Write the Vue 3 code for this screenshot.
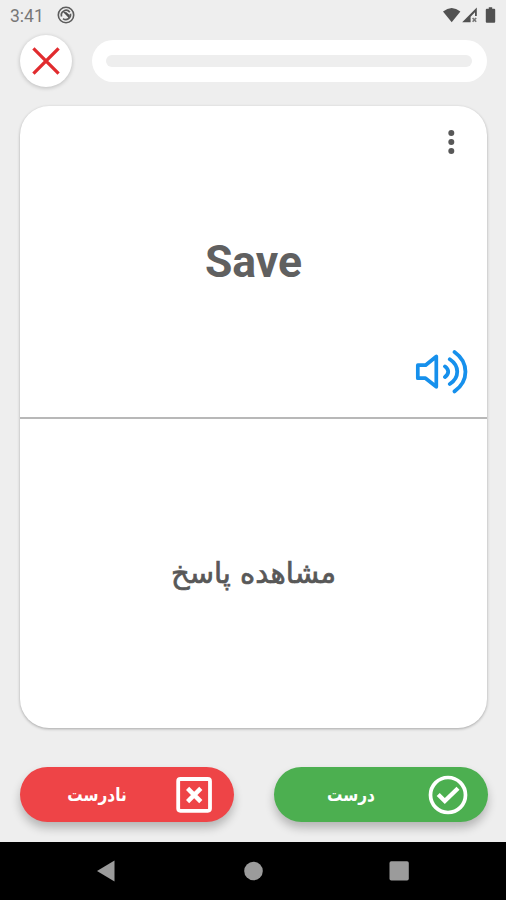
<!-- FlashCard screen -->
<template>
    <div class="screen">
        <div class="status-bar">
            <span class="clock">3:41</span>
            <svg class="app-icon" width="18" height="18" viewBox="0 0 18 18">
                <circle cx="9" cy="9" r="7.7" fill="none" stroke="#5c5c5c" stroke-width="1.6" />
                <path d="M4.6 10.5 A4.7 4.7 0 0 1 12.8 6.2 M13.4 7.8 A4.7 4.7 0 0 1 6 12.6" fill="none" stroke="#5c5c5c" stroke-width="1.7" />
                <path d="M5.8 5.8 L9.5 6.2 L12.8 9.2 L11.8 12 Z" fill="#505050" />
            </svg>
            <svg class="system-icons" width="56" height="18" viewBox="0 0 56 18">
                <path d="M1 4.6 Q9.7 -2.4 18.4 4.6 L9.7 15.3 Z" fill="#515151" />
                <path d="M20.2 15.2 L34.8 .6 V8.9 H33 V5.2 L28.6 9.8 V15.2 Z" fill="#515151" />
                <path d="M30.6 11 L34.2 14.8 M34.2 11 L30.6 14.8" stroke="#777" stroke-width="1.6" />
                <path d="M44.8 1.8 h2 v-1.5 h3.4 v1.5 h2 q1 0 1 1 v12 q0 1 -1 1 h-7.4 q-1 0 -1 -1 v-12 q0 -1 1 -1 z" fill="#515151" />
            </svg>
        </div>

        <div class="top-row">
            <button class="close-button" aria-label="close">
                <svg width="52" height="52" viewBox="0 0 52 52">
                    <path d="M14.6 14.6 L37.4 37.4 M37.4 14.6 L14.6 37.4" fill="none" stroke="#e12b2e" stroke-width="3.3" stroke-linecap="square" />
                </svg>
            </button>
            <div class="progress">
                <div class="progress-track"></div>
            </div>
        </div>

        <div class="card">
            <div class="card-front">
                <svg class="more-icon" width="8" height="26" viewBox="0 0 8 26" fill="#585858">
                    <circle v-for="y in dots" :key="y" cx="4.3" :cy="y" r="3" />
                </svg>
                <span class="word">Save</span>
                <svg class="speaker-icon" width="54" height="46" viewBox="0 0 54 46" fill="none" stroke="#1690ec">
                    <path d="M3.8 17.2 H11.5 L22.3 8.5 V38.8 L11.5 30.2 H3.8 Z" stroke-width="3.7" stroke-linejoin="round" />
                    <path d="M31 18.4 Q37.4 23.6 31 29 M35.8 11.3 C45.7 18 45.7 29.3 35.8 36 M40.5 4 C55.1 14.5 55.1 33 40.5 43.4" stroke-width="3.8" stroke-linecap="round" />
                </svg>
            </div>
            <div class="card-back" @click="showAnswer">
                <span class="hint" dir="rtl">مشاهده پاسخ</span>
            </div>
        </div>

        <div class="actions">
            <button class="action wrong" @click="answer(false)">
                <span class="label" dir="rtl">نادرست</span>
                <svg width="40" height="40" viewBox="0 0 40 40" fill="none" stroke="#fff">
                    <rect x="4.2" y="4" width="31.8" height="31.8" rx="2.2" stroke-width="3.8" />
                    <path d="M13.6 13.4 L26.8 26.6 M26.8 13.4 L13.6 26.6" stroke-width="4.5" />
                </svg>
            </button>
            <button class="action right" @click="answer(true)">
                <span class="label" dir="rtl">درست</span>
                <svg width="40" height="40" viewBox="0 0 40 40" fill="none" stroke="#fff">
                    <circle cx="20" cy="20" r="17.5" stroke-width="3.7" />
                    <path d="M10.2 19.4 L16.8 26 L30 13.2" stroke-width="4.3" />
                </svg>
            </button>
        </div>

        <div class="nav-bar">
            <svg width="20" height="22" viewBox="0 0 20 22"><path d="M1 11 L18.5 .5 V21.5 Z" /></svg>
            <svg width="20" height="22" viewBox="0 0 20 22"><circle cx="10.5" cy="11" r="9.3" /></svg>
            <svg width="20" height="22" viewBox="0 0 20 22"><rect x=".5" y="1.2" width="19.3" height="19.3" rx="1.8" /></svg>
        </div>
    </div>
</template>

<script setup>
import { ref } from 'vue';

// Vertical positions of the menu dots
const dots = [4, 13, 22];

// Local state
const answerVisible = ref(false);
const lastAnswer = ref(null);

const showAnswer = () => {
    answerVisible.value = true;
};

const answer = (isCorrect) => {
    lastAnswer.value = isCorrect;
};
</script>

<style>
body {
    margin: 0;
    background-color: #eee;
}
</style>

<style scoped>
.screen {
    width: 506px;
    height: 900px;
    display: flex;
    flex-direction: column;
    overflow: hidden;
    background-color: #eee;
    font-family: Roboto, "DejaVu Sans", sans-serif;
}

svg {
    display: block;
    flex: none;
}

button {
    padding: 0;
    border: none;
    cursor: pointer;
}

.status-bar {
    height: 35px;
    box-sizing: border-box;
    padding: 6px 8px 0 10px;
    display: flex;
    align-items: flex-start;
}

.clock {
    width: 47px;
    font-size: 17.5px;
    line-height: 20px;
    color: #777;
}

.system-icons {
    margin: 1px 0 0 auto;
}

.top-row {
    height: 52px;
    padding: 0 19px 0 20px;
    display: flex;
    align-items: center;
    gap: 20px;
}

.close-button {
    width: 52px;
    height: 52px;
    border-radius: 50%;
    background-color: #fff;
    box-shadow: 0 1px 4px rgba(0, 0, 0, 0.22);
}

.progress {
    flex: 1;
    height: 42px;
    box-sizing: border-box;
    padding: 15px 15px 15px 14px;
    border-radius: 21px;
    background-color: #fff;
}

.progress-track {
    height: 12px;
    border-radius: 6px;
    background-color: #eee;
}

.card {
    height: 622px;
    margin: 19px 19px 0 20px;
    display: flex;
    flex-direction: column;
    border-radius: 29px;
    background-color: #fff;
    box-shadow: 0 1px 3px rgba(0, 0, 0, 0.3);
}

.card-front {
    height: 313px;
    box-sizing: border-box;
    padding: 23px 19px 23px 0;
    display: flex;
    flex-direction: column;
    align-items: flex-end;
    border-bottom: 2px solid #b8b8b8;
}

.more-icon {
    margin-right: 13px;
}

.word {
    align-self: center;
    margin: 79px -19px 0 0;
    font-size: 44.5px;
    font-weight: 700;
    line-height: 56px;
    color: #606060;
}

.speaker-icon {
    margin-top: auto;
}

.card-back {
    flex: 1;
    padding-bottom: 2px;
    display: flex;
    align-items: center;
    justify-content: center;
}

.hint {
    font-family: "DejaVu Sans", sans-serif;
    font-size: 29px;
    color: #585858;
    -webkit-text-stroke: 0.7px #585858;
}

.actions {
    margin: 39px 18.5px 0 20px;
    display: flex;
    justify-content: space-between;
}

.action {
    width: 214px;
    height: 55px;
    padding-right: 20px;
    display: flex;
    align-items: center;
    border-radius: 28px;
    box-shadow: 0 6px 10px rgba(0, 0, 0, 0.24);
}

.wrong {
    background-color: #ee4447;
}

.right {
    background-color: #4caf50;
}

.label {
    flex: 1;
    font-family: "DejaVu Sans", sans-serif;
    font-size: 18px;
    font-weight: 700;
    color: #fff;
    transform: scaleX(0.85);
}

.nav-bar {
    height: 58px;
    margin-top: auto;
    padding: 0 97px 0 96px;
    display: flex;
    align-items: center;
    justify-content: space-between;
    background-color: #000;
    fill: #9b9b9b;
}
</style>
